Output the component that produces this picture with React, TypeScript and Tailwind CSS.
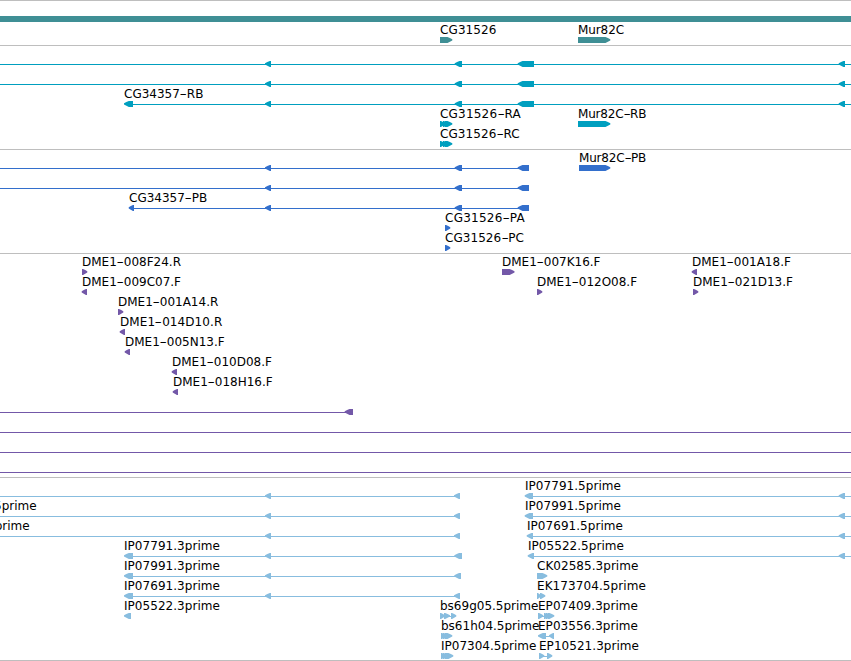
import React from "react";

type Dir = "l" | "r";
type Glyph = [x1: number, x2: number, dir: Dir];
type Label = { x: number; text: string; spacing?: number };
type RowData = { line?: [number, number][]; glyphs?: Glyph[]; labels?: Label[] };
type TrackData = { id: string; color: string; className: string; rows: RowData[] };

const WIDTH = 851;

const l = (x: number, text: string, spacing?: number): Label => ({ x, text, spacing });

const exons: Glyph[] = [[265, 271, "l"], [454.7, 462, "l"], [517.7, 534, "l"], [838.7, 845, "l"]];
const cds: Glyph[] = [[265, 271, "l"], [454.7, 462, "l"], [517.7, 529, "l"]];

const tracks: TrackData[] = [
  {
    id: "transcript",
    color: "#009fbf",
    className: "h-[104px]",
    rows: [
      { line: [[0, WIDTH]], glyphs: exons },
      { line: [[0, WIDTH]], glyphs: exons },
      { line: [[125, WIDTH]], glyphs: [[124, 133, "l"], ...exons], labels: [l(124, "CG34357-RB")] },
      {
        glyphs: [[440, 445, "r"], [443, 448, "r"], [445, 452.3, "r"], [578, 610.3, "r"]],
        labels: [l(440, "CG31526-RA", 0.2), l(578, "Mur82C-RB", -0.2)],
      },
      { glyphs: [[440, 445, "r"], [443, 448, "r"], [445, 452.3, "r"]], labels: [l(440, "CG31526-RC", 0.08)] },
    ],
  },
  {
    id: "cds",
    color: "#336fcc",
    className: "h-[104px]",
    rows: [
      { line: [[0, 520]], glyphs: [...cds, [579, 610.3, "r"]], labels: [l(579, "Mur82C-PB", -0.2)] },
      { line: [[0, 520]], glyphs: cds },
      { line: [[130, 520]], glyphs: [[128.7, 134, "l"], ...cds], labels: [l(129, "CG34357-PB")] },
      { glyphs: [[445, 450.3, "r"]], labels: [l(445, "CG31526-PA", 0.25)] },
      { glyphs: [[445, 450.3, "r"]], labels: [l(445, "CG31526-PC", 0.05)] },
    ],
  },
  {
    id: "bac",
    color: "#7358a8",
    className: "h-[224px]",
    rows: [
      {
        glyphs: [[82, 87.3, "r"], [502, 514.5, "r"], [691.7, 697, "l"]],
        labels: [l(82, "DME1-008F24.R"), l(502, "DME1-007K16.F"), l(692, "DME1-001A18.F")],
      },
      {
        glyphs: [[81.7, 87, "l"], [537, 542.3, "r"], [693, 698.3, "r"]],
        labels: [l(82, "DME1-009C07.F"), l(537, "DME1-012O08.F"), l(693, "DME1-021D13.F")],
      },
      { glyphs: [[118, 123.3, "r"]], labels: [l(118, "DME1-001A14.R")] },
      { glyphs: [[119.7, 125, "l"]], labels: [l(120, "DME1-014D10.R", 0.08)] },
      { glyphs: [[124.7, 130, "l"]], labels: [l(125, "DME1-005N13.F")] },
      { glyphs: [[171.7, 177, "l"]], labels: [l(172, "DME1-010D08.F")] },
      { glyphs: [[172.7, 178, "l"]], labels: [l(173, "DME1-018H16.F")] },
      { line: [[0, 350]], glyphs: [[344.7, 353, "l"]] },
      { line: [[0, WIDTH]] },
      { line: [[0, WIDTH]] },
      { line: [[0, WIDTH]] },
    ],
  },
  {
    id: "est",
    color: "#88bddf",
    className: "h-[183px]",
    rows: [
      {
        line: [[0, 459], [527, WIDTH]],
        glyphs: [[265, 271, "l"], [454, 460, "l"], [524.7, 533, "l"], [838.7, 845, "l"]],
        labels: [l(525, "IP07791.5prime", 0.04)],
      },
      {
        line: [[0, 459], [527, WIDTH]],
        glyphs: [[265, 271, "l"], [454, 460, "l"], [524.7, 533, "l"], [838.7, 845, "l"]],
        labels: [l(-6, "5prime"), l(525, "IP07991.5prime", 0.04)],
      },
      {
        line: [[0, 459], [529, WIDTH]],
        glyphs: [[265, 271, "l"], [454, 460, "l"], [526.7, 533, "l"], [838.7, 845, "l"]],
        labels: [l(-13, "5prime"), l(527, "IP07691.5prime", 0.04)],
      },
      {
        line: [[125, 459], [530, WIDTH]],
        glyphs: [[124, 133, "l"], [265, 271, "l"], [454.3, 462, "l"], [527.7, 534, "l"], [838.7, 845, "l"]],
        labels: [l(124, "IP07791.3prime", 0.04), l(528, "IP05522.5prime", 0.04)],
      },
      {
        line: [[125, 459]],
        glyphs: [[124, 133, "l"], [265, 271, "l"], [454.3, 461, "l"], [537, 547.3, "r"]],
        labels: [l(124, "IP07991.3prime", 0.04), l(537, "CK02585.3prime", 0.04)],
      },
      {
        line: [[125, 459]],
        glyphs: [[124, 133, "l"], [265, 271, "l"], [454, 460, "l"], [537, 541, "r"], [540, 545.3, "r"]],
        labels: [l(124, "IP07691.3prime", 0.04), l(537, "EK173704.5prime", 0.08)],
      },
      {
        line: [[440, 455], [538, 552]],
        glyphs: [
          [124, 131, "l"],
          [440, 445, "r"], [444, 450, "r"], [451, 456.3, "r"],
          [538, 543.3, "r"], [544, 549, "r"], [546, 551, "r"], [548, 554.3, "r"],
        ],
        labels: [l(124, "IP05522.3prime", 0.04), l(440, "bs69g05.5prime"), l(538, "EP07409.3prime", 0.04)],
      },
      {
        line: [[540, 552]],
        glyphs: [[441, 446, "r"], [443, 448, "r"], [445, 452.3, "r"], [538, 546, "l"], [549, 554, "l"]],
        labels: [l(441, "bs61h04.5prime"), l(538, "EP03556.3prime", 0.04)],
      },
      {
        line: [[540, 550]],
        glyphs: [[441, 446, "r"], [443, 448, "r"], [445, 453.3, "r"], [539, 544.3, "r"], [547, 552.3, "r"]],
        labels: [l(441, "IP07304.5prime"), l(539, "EP10521.3prime", 0.04)],
      },
    ],
  },
];

// box with a rounded-off pointed end, 6px tall
function points([x1, x2, dir]: Glyph) {
  const head = Math.min(6, x2 - x1);
  const tip = dir === "l" ? x1 : x2;
  const end = dir === "l" ? x2 : x1;
  const s = dir === "l" ? 1 : -1;
  const mid = tip + s * head * 0.4;
  const neck = tip + s * head * 0.8;
  return `${tip},2.2 ${mid},1 ${neck},0 ${end},0 ${end},6 ${neck},6 ${mid},4.8 ${tip},3.6`;
}

// the hyphen is drawn wide, like a dash
function LabelText({ text }: { text: string }) {
  const [name, suffix] = text.split("-");
  if (!suffix) return <>{text}</>;
  return (
    <>
      {name}
      <span className="mx-[1.3px] inline-block scale-x-[1.7]">-</span>
      {suffix}
    </>
  );
}

function Row({ row, color }: { row: RowData; color: string }) {
  return (
    <div className="relative flex h-5 items-start pt-[15px]">
      <svg className="block h-1.5 w-[851px] shrink-0" viewBox="0 0 851 6" fill={color}>
        {row.line?.map(([a, b], i) => <rect key={i} x={a} y={3} width={b - a} height={1} />)}
        {row.glyphs?.map((g, i) => <polygon key={i} points={points(g)} />)}
      </svg>
      {row.labels?.map((label) => (
        <span
          key={label.x}
          className="absolute top-px text-[12px] leading-[14px] whitespace-pre text-black"
          style={{ left: label.x, letterSpacing: label.spacing }}
        >
          <LabelText text={label.text} />
        </span>
      ))}
    </div>
  );
}

export default function App() {
  return (
    <div className="h-[661px] w-[851px] overflow-hidden border-t border-[#bebebe] bg-white font-['DejaVu_Sans',sans-serif]">
      <section className="h-[45px] border-b border-[#bebebe] pt-[15px]">
        <div className="h-1.5 bg-[#3f8f95]" />
        <Row
          color="#3f8f95"
          row={{
            glyphs: [[440, 452.3, "r"], [578, 610.3, "r"]],
            labels: [l(440, "CG31526", 0.1), l(578, "Mur82C", -0.1)],
          }}
        />
      </section>
      {tracks.map((track) => (
        <section key={track.id} className={`border-b border-[#bebebe] ${track.className}`}>
          {track.rows.map((row, i) => <Row key={i} row={row} color={track.color} />)}
        </section>
      ))}
    </div>
  );
}
